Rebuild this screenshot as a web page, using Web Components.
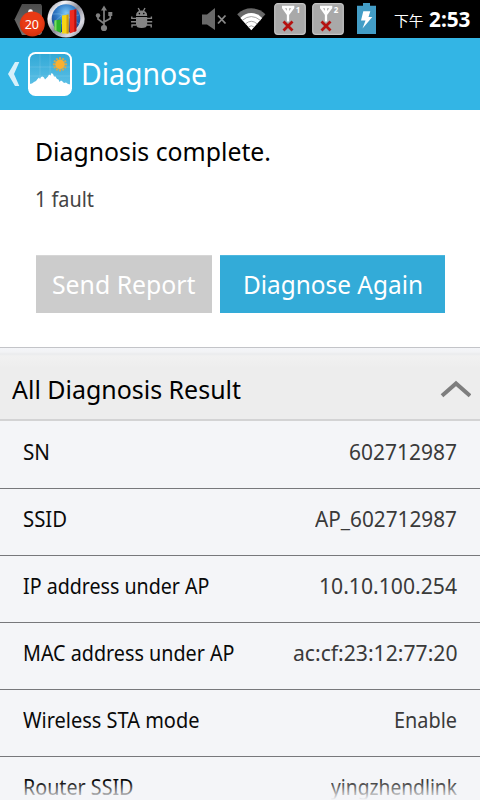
<!DOCTYPE html>
<html lang="en">
<head>
<meta charset="utf-8">
<title>Diagnose</title>
<style>
  body {
    margin: 0;
    width: 480px;
    height: 800px;
    overflow: hidden;
    background: #fff;
    font-family: "Noto Sans", "Noto Sans CJK SC", sans-serif;
  }
</style>
</head>
<body>
<diagnose-screen>
  <status-bar slot="status"></status-bar>
  <app-bar slot="bar"><fit-text width="126">Diagnose</fit-text></app-bar>
  <diagnosis-summary slot="summary">
    <fit-text slot="title" width="236">Diagnosis complete.</fit-text>
    <fit-text slot="detail" width="59">1 fault</fit-text>
    <flat-button slot="actions" disabled style="width: 175.5px"><fit-text width="143.5">Send Report</fit-text></flat-button>
    <flat-button slot="actions" style="width: 225px"><fit-text width="180">Diagnose Again</fit-text></flat-button>
  </diagnosis-summary>
  <result-header><fit-text width="229">All Diagnosis Result</fit-text></result-header>
  <result-row label="SN" value="602712987" label-width="27" value-width="108"></result-row>
  <result-row label="SSID" value="AP_602712987" label-width="44" value-width="142"></result-row>
  <result-row label="IP address under AP" value="10.10.100.254" label-width="186.5" value-width="138"></result-row>
  <result-row label="MAC address under AP" value="ac:cf:23:12:77:20" label-width="211.5" value-width="164.5"></result-row>
  <result-row label="Wireless STA mode" value="Enable" label-width="176.5" value-width="63"></result-row>
  <result-row label="Router SSID" value="yingzhendlink" label-width="110.5" value-width="126"></result-row>
</diagnose-screen>

<script>
class DiagnoseScreen extends HTMLElement {
  constructor() {
    super();
    this.attachShadow({ mode: 'open' }).innerHTML = `
      <style>
        :host {
          display: flex;
          flex-direction: column;
          position: relative;
          width: 480px;
          height: 800px;
          overflow: hidden;
        }
        .results {
          flex: 1;
          min-height: 0;
          overflow: hidden;
          background: #f4f5f8;
        }
        /* Fading edge of the scroll view */
        .fade {
          position: absolute;
          left: 0;
          right: 0;
          bottom: 0;
          height: 18px;
          background: linear-gradient(rgba(244, 245, 248, 0), #f4f5f8);
        }
      </style>
      <slot name="status"></slot>
      <slot name="bar"></slot>
      <slot name="summary"></slot>
      <div class="results"><slot></slot></div>
      <div class="fade"></div>
    `;
  }
}

class StatusBar extends HTMLElement {
  constructor() {
    super();
    const sim = (x, n) => `
      <svg width="38" height="38" viewBox="${x} 0 38 38">
        <rect x="${x + 4.7}" y="3.7" width="30.6" height="30.6" rx="3" fill="#a9a9a9" stroke="#c4c4c4" stroke-width="1.2"/>
        <path d="M${x + 12} 7H${x + 24.3}M${x + 13} 7.5L${x + 18} 14.5L${x + 23.3} 7.5M${x + 18} 7V21.5" fill="none" stroke="#fff" stroke-width="2.3"/>
        <path d="M${x + 13.5} 21.5L${x + 22.5} 30.5M${x + 22.5} 21.5L${x + 13.5} 30.5" stroke="#b5110f" stroke-width="2.8"/>
        <text x="${x + 25.7}" y="12.5" font-size="8" font-weight="700" fill="#fff">${n}</text>
      </svg>`;
    this.attachShadow({ mode: 'open' }).innerHTML = `
      <style>
        :host {
          display: flex;
          height: 38px;
          flex: none;
          background: #000;
          color: #fff;
          padding: 0 9px 0 10px;
        }
        svg { display: block; flex: none; }
        .gap { width: 30px; flex: none; }
        .clock { display: flex; margin-left: 8px; }
        .period { font-size: 14px; line-height: 42px; width: 35px; }
        .time { font-size: 20.5px; line-height: 39px; font-weight: 700; }
      </style>
      <svg width="36" height="38" viewBox="10 0 36 38">
        <defs>
          <linearGradient id="hex" x1="0" y1="0" x2="0" y2="1"><stop offset="0" stop-color="#4b4b4b"/><stop offset="1" stop-color="#737373"/></linearGradient>
          <radialGradient id="red" cx=".5" cy=".4" r=".6"><stop offset=".6" stop-color="#e83a14"/><stop offset="1" stop-color="#d32f0c"/></radialGradient>
        </defs>
        <path d="M22 4H41L42 6V33L40 35H22L14.5 19.5Z" fill="url(#hex)"/>
        <circle cx="30.5" cy="11.5" r="2.3" fill="#fff"/>
        <circle cx="32.3" cy="24" r="12.5" fill="url(#red)"/>
        <text x="31.8" y="28.7" font-size="12.5" fill="#fff" text-anchor="middle">20</text>
      </svg>
      <svg width="40" height="38" viewBox="46 0 40 38">
        <defs>
          <linearGradient id="rim" x1="0" y1="0" x2="1" y2="1"><stop offset="0" stop-color="#777a88"/><stop offset=".25" stop-color="#f4f4f8"/><stop offset=".5" stop-color="#8b8c98"/><stop offset=".75" stop-color="#dcdce4"/><stop offset="1" stop-color="#666875"/></linearGradient>
          <radialGradient id="globe" cx=".5" cy=".3" r=".7"><stop offset="0" stop-color="#7dc6f4"/><stop offset=".5" stop-color="#2f78c4"/><stop offset="1" stop-color="#123a86"/></radialGradient>
        </defs>
        <circle cx="66" cy="19" r="18.6" fill="url(#rim)"/>
        <circle cx="66" cy="18.5" r="14.3" fill="url(#globe)"/>
        <path d="M53 25Q59 13 77 10M56 29Q66 16 79 15M53 14Q65 12 79 24" fill="none" stroke="#8fc6ee" stroke-opacity=".5" stroke-width=".8"/>
        <path d="M54.5 20.5L61 19.5V33L54.5 30Z" fill="#2bb52b"/>
        <path d="M54.5 20.5L56.5 20V31L54.5 30Z" fill="#7bdc62"/>
        <path d="M62 15.5L68.5 14.5V33.5H62Z" fill="#f5d415"/>
        <path d="M66.5 15L68.5 14.5V33.5H66.5Z" fill="#d59d08"/>
        <path d="M69.7 10.5L76.3 9.3V31L69.7 33.5Z" fill="#ee2b20"/>
        <path d="M74.3 9.7L76.3 9.3V31L74.3 32Z" fill="#b8100f"/>
      </svg>
      <svg width="34" height="38" viewBox="86 0 34 38">
        <g fill="none" stroke="#818181" stroke-width="1.7">
          <path d="M104 8V28M98 16V19L104 23.5M110.3 14V18.5L104 22"/>
        </g>
        <g fill="#818181">
          <path d="M104 5.5L107 10.5H101Z"/>
          <circle cx="104" cy="28" r="3.1"/>
          <circle cx="98" cy="15.5" r="2.2"/>
          <rect x="108.3" y="12" width="4" height="4"/>
        </g>
      </svg>
      <svg width="40" height="38" viewBox="120 0 40 38">
        <g fill="#858585">
          <path d="M136 16Q136 10.5 141.6 10.5Q147.2 10.5 147.2 16Z"/>
          <path d="M136 17H147.2V24.5Q147 28 141.6 28Q136.2 28 136 24.5Z"/>
        </g>
        <path d="M138.2 8L139.8 11M145 8L143.4 11M131.8 16.5V18.4H136M136 21.7H131M136 25H132V27.5M151.4 16.5V18.4H147M147 21.7H152.2M147 25H151.2V27.5" fill="none" stroke="#858585" stroke-width="1.4"/>
        <circle cx="139.4" cy="13.6" r=".8" fill="#000"/><circle cx="143.8" cy="13.6" r=".8" fill="#000"/>
      </svg>
      <div class="gap"></div>
      <svg width="40" height="38" viewBox="190 0 40 38">
        <path d="M202 14.5H207L215 8V30L207 24.5H202Z" fill="#696969"/>
        <path d="M218 15.5L225.5 23.5M225.5 15.5L218 23.5" stroke="#8a8a8a" stroke-width="1.8"/>
      </svg>
      <svg width="40" height="38" viewBox="230 0 40 38">
        <path d="M251.3 30L237.2 14.2Q243.5 8.3 251.3 8.3T265.4 14.2Z" fill="#686868"/>
        <path d="M251.3 30.2L240.4 18Q245 13 251.3 13T262.2 18Z" fill="#fff"/>
        <path d="M242.3 20.3Q251.3 12.8 260.3 20.3M245.5 23.8Q251.3 18.8 257.1 23.8M248.5 27Q251.3 24.6 254.1 27" fill="none" stroke="#9a9a9a" stroke-width=".9"/>
      </svg>
      ${sim(270, 1)}
      ${sim(308, 2)}
      <svg width="40" height="38" viewBox="346 0 40 38">
        <path d="M363 3H370V5.7H376V34H357V5.7H363Z" fill="#439dc6"/>
        <path d="M363.3 11.3H370.3L368.5 17H372.3L362.5 28.5L365.5 20.5H361Z" fill="#fff"/>
      </svg>
      <div class="clock">
        <div class="period"><fit-text width="29.5">下午</fit-text></div>
        <div class="time"><fit-text width="41.5">2:53</fit-text></div>
      </div>
    `;
  }
}

class AppBar extends HTMLElement {
  constructor() {
    super();
    // Rays of the sun in the app icon
    let rays = '';
    for (let i = 0; i < 12; i++) {
      rays += `<rect x="59" y="57.2" width="2" height="2.2" transform="rotate(${i * 30} 60 64.3)"/>`;
    }
    this.attachShadow({ mode: 'open' }).innerHTML = `
      <style>
        :host {
          display: flex;
          flex: none;
          height: 72px;
          background: #33b5e5;
          color: #fff;
          font-size: 30px;
          line-height: 71px;
        }
        svg { display: block; flex: none; }
      </style>
      <svg width="81" height="72" viewBox="0 38 81 72">
        <defs>
          <linearGradient id="sky" x1="0" y1="0" x2="0" y2="1"><stop offset="0" stop-color="#32a9d6"/><stop offset="1" stop-color="#64c4e9"/></linearGradient>
        </defs>
        <path d="M15 62H19.3L14 74L19.3 86H15L8 74Z" fill="#d6f0fa"/>
        <rect x="28" y="52" width="44" height="44" rx="7.5" fill="#fff"/>
        <rect x="30" y="54" width="40" height="38" rx="5.5" fill="url(#sky)"/>
        <path d="M30 67H70M30 76H70M40 54V84M50 54V80" stroke="#fff" stroke-opacity=".12"/>
        <path d="M29.5 84L32 83.5L34 82L36 81L37.5 79L39 77.5L40 79L41 77L42.5 76.5L44 77.5L45 79.5L46.5 78L48 76.5L49 74.5L50.5 75.5L51.5 73L53 74L54 76.5L55.5 76.5L57 79L58.5 79.5L59.5 82L61 80.5L62.5 81.5L64 83L66 82.5L68 84L70.5 84.5V93H29.5Z" fill="#fff"/>
        <g fill="#d3a84d">${rays}</g>
        <circle cx="60" cy="64.3" r="4.8" fill="#fbb02f"/>
      </svg>
      <slot></slot>
    `;
  }
}

class DiagnosisSummary extends HTMLElement {
  constructor() {
    super();
    this.attachShadow({ mode: 'open' }).innerHTML = `
      <style>
        :host {
          display: flex;
          flex-direction: column;
          flex: none;
          box-sizing: border-box;
          height: 238px;
          padding: 23px 35px 0 36px;
          background: #fff;
          border-bottom: 1px solid #c3c4c8;
        }
        .title { height: 36px; font-size: 25.5px; line-height: 36px; color: #000; margin-left: -1px; }
        .detail { height: 30px; margin-top: 15px; font-size: 21.5px; line-height: 30px; color: #444; margin-left: -1px; }
        .actions { display: flex; justify-content: space-between; margin-top: 41px; }
      </style>
      <div class="title"><slot name="title"></slot></div>
      <div class="detail"><slot name="detail"></slot></div>
      <div class="actions"><slot name="actions"></slot></div>
    `;
  }
}

class FlatButton extends HTMLElement {
  constructor() {
    super();
    this.attachShadow({ mode: 'open' }).innerHTML = `
      <style>
        :host {
          display: flex;
          justify-content: center;
          box-sizing: border-box;
          height: 58px;
          background: #33abd8;
          border-top: 1px solid #4db8df;
          color: #fff;
          font-size: 25.5px;
          line-height: 56px;
        }
        :host([disabled]) {
          background: #ccc;
          border-top-color: #d6d6d6;
        }
      </style>
      <slot></slot>
    `;
  }
}

class ResultHeader extends HTMLElement {
  constructor() {
    super();
    this.attachShadow({ mode: 'open' }).innerHTML = `
      <style>
        :host {
          display: flex;
          justify-content: space-between;
          box-sizing: border-box;
          height: 73px;
          padding: 6px 9px 0 12px;
          background: linear-gradient(#f4f5f8 0, #f2f3f5 4px, #eaebed 6px, #f1f1f1 8px, #ededed 20px, #ededed 100%);
          border-bottom: 2px solid #d3d3d4;
          color: #000;
          font-size: 25.5px;
          line-height: 71px;
        }
        svg { display: block; margin-top: 25px; }
      </style>
      <slot></slot>
      <svg width="31" height="20" viewBox="440 379 31 20">
        <path d="M442 395.8L456 383.5L470 395.8" fill="none" stroke="#7e7e7e" stroke-width="4"/>
      </svg>
    `;
  }
}

class ResultRow extends HTMLElement {
  constructor() {
    super();
    this.attachShadow({ mode: 'open' });
  }

  connectedCallback() {
    const get = name => this.getAttribute(name);
    this.shadowRoot.innerHTML = `
      <style>
        :host {
          display: flex;
          justify-content: space-between;
          box-sizing: border-box;
          height: 67px;
          padding: 16px 23px 0 22.5px;
          border-bottom: 1px solid #77787b;
          font-size: 22px;
          line-height: 26px;
          color: #0a0a0a;
        }
        :host(:first-of-type) { height: 68px; padding-top: 17px; }
        .value { color: #3a3a3a; }
      </style>
      <fit-text width="${get('label-width')}">${get('label')}</fit-text>
      <fit-text class="value" width="${get('value-width')}">${get('value')}</fit-text>
    `;
  }
}

// Condenses or stretches one line of text to the given width
class FitText extends HTMLElement {
  constructor() {
    super();
    this.attachShadow({ mode: 'open' }).innerHTML = `
      <style>
        :host { display: block; white-space: nowrap; flex: none; }
        span { display: inline-block; transform-origin: 0 50%; }
      </style>
      <span><slot></slot></span>
    `;
  }

  connectedCallback() {
    const width = parseFloat(this.getAttribute('width'));
    const span = this.shadowRoot.querySelector('span');
    const natural = span.getBoundingClientRect().width;
    this.style.width = width + 'px';
    span.style.transform = `scaleX(${width / natural})`;
  }
}

customElements.define('diagnose-screen', DiagnoseScreen);
customElements.define('status-bar', StatusBar);
customElements.define('app-bar', AppBar);
customElements.define('diagnosis-summary', DiagnosisSummary);
customElements.define('flat-button', FlatButton);
customElements.define('result-header', ResultHeader);
customElements.define('result-row', ResultRow);
// Last, so that the text is measured with its final font
customElements.define('fit-text', FitText);
</script>
</body>
</html>
